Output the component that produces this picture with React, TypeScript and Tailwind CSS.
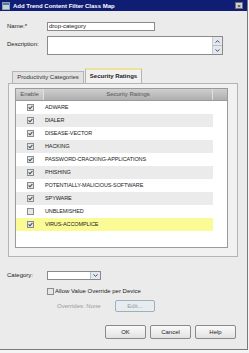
import React from "react";

const rows = [
  { name: "ADWARE", on: true },
  { name: "DIALER", on: true },
  { name: "DISEASE-VECTOR", on: true },
  { name: "HACKING", on: true },
  { name: "PASSWORD-CRACKING-APPLICATIONS", on: true },
  { name: "PHISHING", on: true },
  { name: "POTENTIALLY-MALICIOUS-SOFTWARE", on: true },
  { name: "SPYWARE", on: true },
  { name: "UNBLEMISHED", on: false },
  { name: "VIRUS-ACCOMPLICE", on: true },
];

const Check = ({ on }: { on: boolean }) => (
  <div className="w-[7px] h-[7px] border border-[#8c8c8c] bg-[#e6e6e6] flex items-center justify-center">
    {on && (
      <svg width="5" height="5" viewBox="0 0 5 5">
        <path d="M0.6 2.4 L2 3.8 L4.4 1" stroke="#2d4a5a" strokeWidth="1.1" fill="none" />
      </svg>
    )}
  </div>
);

const Btn = ({ label }: { label: string }) => (
  <div className="w-[41px] h-[14px] border border-[#8a8a8a] rounded-[2px] bg-gradient-to-b from-[#fafafa] to-[#e2e2e2] flex items-center justify-center text-[6px] text-[#222]">
    {label}
  </div>
);

export default function App() {
  return (
    <div
      className="w-[249px] h-[353px] bg-[#f4f4f4] text-[#222]"
      style={{ fontFamily: '"Liberation Sans", Arial, sans-serif' }}
    >
      <div className="w-[248px] h-[350px] bg-[#ebebeb] border-r border-b border-[#7a7a7a] flex flex-col">
        {/* title bar */}
        <div className="h-[11px] bg-[#0f1d74] flex items-center pl-[2px] pr-[4px]">
          <div className="w-[8px] h-[8px] bg-[#c9d2dc] border border-[#8aa0b4] flex items-start">
            <div className="w-full h-[2px] bg-[#5d7894]" />
          </div>
          <span className="ml-[3px] text-[6px] font-bold text-white leading-none">
            Add Trend Content Filter Class Map
          </span>
          <div className="ml-auto w-[8px] h-[7px] bg-[#d4d4d4] border border-[#6f6f6f] flex items-center justify-center text-[6px] leading-none font-bold text-[#333]">
            ×
          </div>
        </div>

        {/* form */}
        <div className="flex items-center mt-[11px] pl-[7px]">
          <span className="w-[40px] text-[6px]">Name:*</span>
          <div className="w-[108px] h-[9px] bg-white border border-[#8a8a8a] flex items-center pl-[1px] text-[6px]">
            drop-category
          </div>
        </div>
        <div className="flex items-start mt-[5px] pl-[7px]">
          <span className="w-[40px] text-[6px] mt-[4px]">Description:</span>
          <div className="w-[176px] h-[19px] bg-white border border-[#8a8a8a] flex justify-end">
            <div className="w-[10px] flex flex-col border-l border-[#c8c8c8]">
              <div className="flex-1 bg-[#e4e8ee] border-b border-[#b8c0ca] flex items-center justify-center">
                <svg width="5" height="3" viewBox="0 0 5 3">
                  <path d="M0.5 2.5 L2.5 0.7 L4.5 2.5" stroke="#3d5368" strokeWidth="1" fill="none" />
                </svg>
              </div>
              <div className="flex-1 bg-[#e4e8ee] flex items-center justify-center">
                <svg width="5" height="3" viewBox="0 0 5 3">
                  <path d="M0.5 0.5 L2.5 2.3 L4.5 0.5" stroke="#3d5368" strokeWidth="1" fill="none" />
                </svg>
              </div>
            </div>
          </div>
        </div>

        {/* tabs */}
        <div className="flex items-end mt-[13px] pl-[12px] h-[15px]">
          <div className="w-[72px] h-[12px] bg-[#e2e2e2] border border-b-0 border-[#b4b4b4] flex items-center justify-center text-[6px] text-[#333]">
            Productivity Categories
          </div>
          <div className="ml-[1px] w-[57px] h-[15px] bg-[#f1f1f1] border border-b-0 border-[#b4b4b4] border-t-2 border-t-[#eee39a] flex items-center justify-center text-[6px] font-bold text-[#222]">
            Security Ratings
          </div>
        </div>

        {/* panel */}
        <div className="ml-[8px] w-[230px] h-[174px] bg-[#f1f1f1] border border-[#b4b4b4] pt-[4px] pl-[6px]">
          <div className="w-[213px] h-[160px] bg-white border border-[#9a9a9a] flex flex-col">
            <div className="flex h-[12px] text-[6px] text-[#555] bg-gradient-to-b from-[#cfcfcf] to-[#aeaeae] border-b border-[#9a9a9a]">
              <div className="w-[28px] flex items-center justify-center border-r border-[#e0e0e0] bg-gradient-to-b from-[#d8d8d8] to-[#bdbdbd]">
                Enable
              </div>
              <div className="w-[169px] flex items-center justify-center border-r border-[#e0e0e0]">
                Security Ratings
              </div>
              <div className="flex-1" />
            </div>
            {rows.map((r, i) => (
              <div
                key={r.name}
                className={`flex items-center h-[13px] w-[197px] ${
                  i === 9 ? "bg-[#fbfb96]" : i % 2 === 1 ? "bg-[#ebebeb]" : "bg-white"
                }`}
              >
                <div className="w-[28px] flex justify-center">
                  <Check on={r.on} />
                </div>
                <span className="ml-[1px] text-[5.5px] text-[#222] tracking-[-0.1px]">{r.name}</span>
              </div>
            ))}
          </div>
        </div>

        {/* category */}
        <div className="flex items-center mt-[14px] pl-[7px]">
          <span className="w-[40px] text-[6px]">Category:</span>
          <div className="w-[54px] h-[9px] bg-white border border-[#8a8a8a] flex justify-end">
            <div className="w-[10px] bg-[#e4e8ee] border-l border-[#b8c0ca] flex items-center justify-center">
              <svg width="5" height="3" viewBox="0 0 5 3">
                <path d="M0.5 0.5 L2.5 2.3 L4.5 0.5" stroke="#3d5368" strokeWidth="1" fill="none" />
              </svg>
            </div>
          </div>
        </div>
        <div className="flex items-center mt-[7px] pl-[47px]">
          <div className="w-[7px] h-[7px] border border-[#8c8c8c] bg-[#e6e6e6]" />
          <span className="ml-[1px] text-[6px]">Allow Value Override per Device</span>
        </div>
        <div className="flex items-center mt-[4px] pl-[57px]">
          <span className="w-[58px] text-[6px] text-[#9a9a9a]">Overrides: None</span>
          <div className="w-[40px] h-[12px] border border-[#9fb0bd] rounded-[2px] bg-[#e6ecf0] flex items-center justify-center text-[6px] text-[#9a9a9a]">
            Edit...
          </div>
        </div>

        {/* buttons */}
        <div className="flex mt-[13px] pl-[105px] gap-[4px]">
          <Btn label="OK" />
          <Btn label="Cancel" />
          <Btn label="Help" />
        </div>
      </div>
    </div>
  );
}
